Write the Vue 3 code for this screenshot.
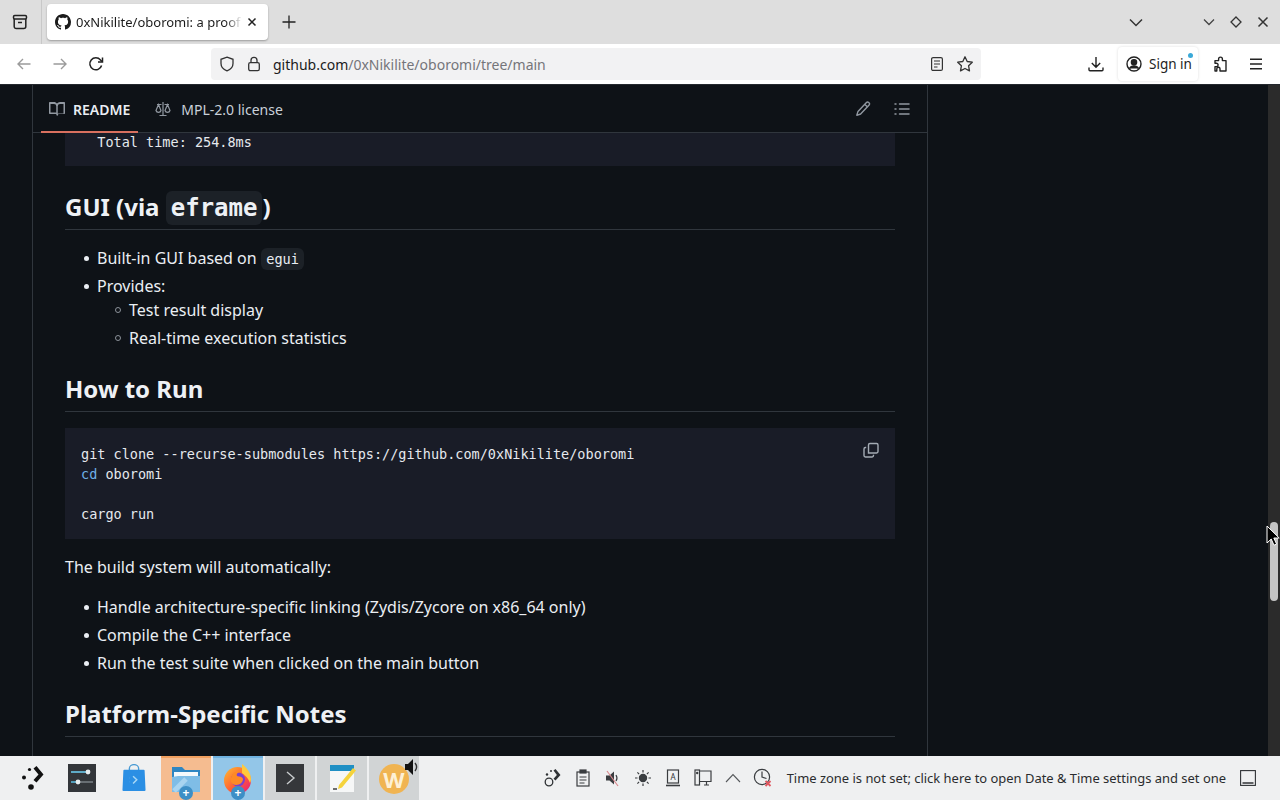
<script setup>
const trayStroke = '#3a3d40'
</script>

<template>
  <div class="screen">
    <header class="tabbar">
      <button class="tb-btn first">
        <svg width="18" height="18" viewBox="0 0 18 18" fill="none" stroke="#222" stroke-width="1.5"><rect x="2.5" y="2.5" width="13" height="3.5" rx="1.2"/><path d="M3.2 6v7.5a2 2 0 0 0 2 2h7.6a2 2 0 0 0 2-2V6"/><path d="M7 9.5h4"/></svg>
      </button>
      <div class="divider"></div>
      <div class="tab">
        <svg class="favicon" width="16" height="16" viewBox="0 0 16 16" fill="#1b1b1b"><path d="M8 0C3.58 0 0 3.58 0 8c0 3.54 2.29 6.53 5.47 7.59.4.07.55-.17.55-.38 0-.19-.01-.82-.01-1.49-2.01.37-2.53-.49-2.69-.94-.09-.23-.48-.94-.82-1.13-.28-.15-.68-.52-.01-.53.63-.01 1.08.58 1.23.82.72 1.21 1.87.87 2.33.66.07-.52.28-.87.51-1.07-1.78-.2-3.64-.89-3.64-3.95 0-.87.31-1.59.82-2.15-.08-.2-.36-1.02.08-2.12 0 0 .67-.21 2.2.82.64-.18 1.32-.27 2-.27s1.36.09 2 .27c1.53-1.04 2.2-.82 2.2-.82.44 1.1.16 1.92.08 2.12.51.56.82 1.27.82 2.15 0 3.07-1.87 3.75-3.65 3.95.29.25.54.73.54 1.48 0 1.07-.01 1.93-.01 2.2 0 .21.15.46.55.38A8.01 8.01 0 0 0 16 8c0-4.42-3.58-8-8-8z"/></svg>
        <span class="tab-title">0xNikilite/oboromi: a proof of concept</span>
        <svg class="tab-x" width="12" height="12" viewBox="0 0 12 12" stroke="#222" stroke-width="1.5"><path d="M2.5 2.5l7 7M9.5 2.5l-7 7"/></svg>
      </div>
      <svg class="plus" width="14" height="14" viewBox="0 0 14 14" stroke="#222" stroke-width="1.3"><path d="M7 .5v13M.5 7h13"/></svg>
      <div class="grow"></div>
      <svg class="chev-all" width="14" height="9" viewBox="0 0 14 9" fill="none" stroke="#333" stroke-width="1.5"><path d="M1 1.5l6 6 6-6"/></svg>
      <svg class="wc wc-1" width="12" height="8" viewBox="0 0 12 8" fill="none" stroke="#444" stroke-width="1.3"><path d="M1 1.5l5 5 5-5"/></svg>
      <svg class="wc wc-2" width="12" height="12" viewBox="0 0 12 12" fill="none" stroke="#333" stroke-width="1.3"><path d="M6 1l5 5-5 5-5-5z"/></svg>
      <svg class="wc wc-3" width="12" height="12" viewBox="0 0 12 12" fill="none" stroke="#333" stroke-width="1.5"><path d="M1.5 1.5l9 9M10.5 1.5l-9 9"/></svg>
    </header>

    <nav class="toolbar">
      <svg class="nav nav-back" width="16" height="16" viewBox="0 0 16 16" fill="none" stroke="#9b9b9b" stroke-width="1.4"><path d="M14.5 8H2M7 3L2 8l5 5"/></svg>
      <svg class="nav nav-fwd" width="16" height="16" viewBox="0 0 16 16" fill="none" stroke="#9b9b9b" stroke-width="1.4"><path d="M1.5 8H14M9 3l5 5-5 5"/></svg>
      <svg class="nav nav-reload" width="16" height="16" viewBox="0 0 16 16" fill="none" stroke="#222" stroke-width="1.5"><path d="M13.6 9.5A6 6 0 1 1 12.5 4L14 5.5"/><path d="M14.5 1.5v4.5H10"/></svg>
      <div class="urlbar">
        <svg width="16" height="16" viewBox="0 0 16 16" fill="none" stroke="#333" stroke-width="1.3"><path d="M8 1.2l6 2.1v4.2c0 3.4-2.4 6-6 7.3-3.6-1.3-6-3.9-6-7.3V3.3z"/></svg>
        <svg class="lock" width="14" height="16" viewBox="0 0 14 16" fill="none" stroke="#333" stroke-width="1.3"><rect x="1.7" y="6.7" width="10.6" height="8" rx="1.6"/><path d="M4 6.7V4.3a3 3 0 0 1 6 0v2.4"/></svg>
        <span class="url"><b>github.com</b>/0xNikilite/oboromi/tree/main</span>
        <div class="grow"></div>
        <svg class="reader" width="14" height="16" viewBox="0 0 14 16" fill="none" stroke="#333" stroke-width="1.2"><rect x="1.6" y="1.6" width="10.8" height="12.8" rx="1.5"/><path d="M4 5h6M4 8h6M4 11h3.5"/></svg>
        <svg class="star" width="18" height="18" viewBox="0 0 18 18" fill="none" stroke="#333" stroke-width="1.3"><path d="M9 1.8l2.2 4.7 5.1.7-3.7 3.6.9 5.1L9 13.5l-4.5 2.4.9-5.1-3.7-3.6 5.1-.7z" stroke-linejoin="round"/></svg>
      </div>
      <svg class="dl" width="16" height="16" viewBox="0 0 16 16" fill="none" stroke="#222" stroke-width="1.4"><path d="M8 1v10M3.8 7L8 11.2 12.2 7M1 11.5v2.3a1 1 0 0 0 1 1h12a1 1 0 0 0 1-1v-2.3"/></svg>
      <div class="signin">
        <svg width="16" height="16" viewBox="0 0 16 16" fill="none" stroke="#222" stroke-width="1.4"><circle cx="8" cy="8" r="7"/><circle cx="8" cy="6.2" r="2.6" fill="#222"/><path d="M3.4 12.6C4.5 10.6 6 10 8 10s3.5.6 4.6 2.6" fill="#222"/></svg>
        <span>Sign in</span>
        <i class="dot"></i>
      </div>
      <svg class="ext" width="16" height="16" viewBox="0 0 16 16" fill="none" stroke="#222" stroke-width="1.4" stroke-linejoin="round"><path d="M2 4.6h3.6V3a1.9 1.9 0 0 1 3.8 0v1.6H13V15H7v-2.2a1.6 1.6 0 0 0-3.2 0V15H2v-4.4h1.4a1.7 1.7 0 0 0 0-3.4H2z"/></svg>
      <svg class="menu" width="14" height="12" viewBox="0 0 14 12" stroke="#222" stroke-width="1.4"><path d="M1 1.2h12M1 6h12M1 10.8h12"/></svg>
    </nav>

    <main class="viewport">
      <section class="readme">
        <div class="readme-head">
          <div class="rtab active">
            <svg width="16" height="16" viewBox="0 0 16 16" fill="#9198a1"><path d="M0 1.75A.75.75 0 0 1 .75 1h4.25c1.2 0 2.27.59 3 1.5A3.74 3.74 0 0 1 11 1h4.25a.75.75 0 0 1 .75.75v10.5a.75.75 0 0 1-.75.75h-5.23c-.55 0-1.01.45-1.02 1a.75.75 0 0 1-1.5 0c-.01-.55-.47-1-1.02-1H.75a.75.75 0 0 1-.75-.75zM7.25 12.8V5.25A2.25 2.25 0 0 0 5 3H1.5v8.5h4.73c.37 0 .72.11 1.02.3zm1.5 0c.3-.19.65-.3 1.02-.3h4.73V3H11a2.25 2.25 0 0 0-2.25 2.25z"/></svg>
            <span>README</span>
          </div>
          <div class="rtab second">
            <svg width="16" height="16" viewBox="0 0 16 16" fill="none" stroke="#9198a1" stroke-width="1.2"><path d="M8 1v13M4.5 14.5h7M2 3.5h4.5M9.5 3.5H14M3.5 3.5L1 9.5a2.6 2.6 0 0 0 5 0zM12.5 3.5L10 9.5a2.6 2.6 0 0 0 5 0z"/></svg>
            <span>MPL-2.0 license</span>
          </div>
          <div class="grow"></div>
          <svg class="pencil" width="16" height="16" viewBox="0 0 16 16" fill="none" stroke="#9198a1" stroke-width="1.4" stroke-linejoin="round"><path d="M11.2 1.8a1.8 1.8 0 0 1 2.9 2.2L5.6 13 1.8 14.3 3 10.4z"/><path d="M9.8 3.4l2.9 2.6"/></svg>
          <svg class="toc" width="16" height="16" viewBox="0 0 16 16" stroke="#9198a1" stroke-width="1.5" stroke-linecap="round"><path d="M5.5 3h9.5M5.5 8h9.5M5.5 13h9.5M1 3h1M1 8h1M1 13h1"/></svg>
        </div>

        <article class="body">
          <pre class="code top"><code>  Total time: 254.8ms</code></pre>

          <h2 class="gui">GUI (via <code class="inline">eframe</code>)</h2>
          <ul>
            <li>Built-in GUI based on <code class="inline">egui</code></li>
            <li>Provides:
              <ul>
                <li>Test result display</li>
                <li>Real-time execution statistics</li>
              </ul>
            </li>
          </ul>

          <h2>How to Run</h2>
          <div class="codewrap">
            <pre class="code"><code>git clone --recurse-submodules https://github.com/0xNikilite/oboromi
<span class="kw">cd</span> oboromi

cargo run</code></pre>
            <svg class="copy" width="16" height="16" viewBox="0 0 16 16" fill="none" stroke="#a4abb4" stroke-width="1.4"><path d="M5.5 3v-.6A1.4 1.4 0 0 1 6.9 1h6.7A1.4 1.4 0 0 1 15 2.4v6.7a1.4 1.4 0 0 1-1.4 1.4H5.5z" transform="translate(0 .5)"/><path d="M3.2 5.5h-.8A1.4 1.4 0 0 0 1 6.9v6.7A1.4 1.4 0 0 0 2.4 15h6.7a1.4 1.4 0 0 0 1.4-1.4v-.8"/></svg>
          </div>

          <p>The build system will automatically:</p>
          <ul>
            <li>Handle architecture-specific linking (Zydis/Zycore on x86_64 only)</li>
            <li>Compile the C++ interface</li>
            <li>Run the test suite when clicked on the main button</li>
          </ul>

          <h2>Platform-Specific Notes</h2>
        </article>
      </section>

      <div class="grow"></div>
      <div class="scrollbar">
        <div class="thumb"></div>
      </div>
      <svg class="cursor" width="14" height="22" viewBox="0 0 14 22"><path d="M1 1v17l4.2-4 2.8 6.2 2.6-1.1-2.8-6.1H13.2z" fill="#000" stroke="#fff" stroke-width="1"/></svg>
    </main>

    <footer class="taskbar">
      <div class="task launcher">
        <svg width="26" height="26" viewBox="0 0 26 26" fill="#111"><circle cx="9.5" cy="4.5" r="1.6"/><circle cx="4" cy="12.5" r="2"/><circle cx="11" cy="22" r="2.8"/><path d="M13.5 3.5l3-2.5 7 8.5-7 8-3-2.6 5-5.4z"/></svg>
      </div>
      <div class="task">
        <svg width="28" height="28" viewBox="0 0 28 28"><rect width="28" height="28" fill="#33363a"/><path d="M3 8h18M11 18h14" stroke="#7b8186" stroke-width="1.4"/><path d="M3 8h17M3 18h8" stroke="#5cc0e4" stroke-width="1.6"/><circle cx="20" cy="8" r="2.4" fill="#e9eef0"/><circle cx="10" cy="18" r="2.4" fill="#e9eef0"/></svg>
      </div>
      <div class="task bag">
        <svg width="26" height="30" viewBox="0 0 26 30"><path d="M8 7V4.5a5 4 0 0 1 10 0V7" fill="none" stroke="#4a9bd4" stroke-width="1.5"/><path d="M2.5 6h21q1 0 1 1l1 21q0 1-1 1H1.500q-1 0-1-1l1-21q0-1 1-1z" fill="#2b8fe4"/><path d="M12 13l4 4-4 4M8 15h.1M8 19h.1" fill="none" stroke="#a9d8f5" stroke-width="1.6"/></svg>
      </div>
      <div class="task folder">
        <svg width="30" height="30" viewBox="0 0 30 30"><path d="M1 3h10l3 3h15v22H1z" fill="#2f86c2"/><rect x="3" y="8" width="24" height="6" fill="#f5f9fb"/><path d="M1 13l6-1h22v16H1z" fill="#7fbde6"/><path d="M3 27L15 15" stroke="#a8d4f0" stroke-width="5"/></svg>
        <i class="badge">+</i>
      </div>
      <div class="task firefox">
        <svg width="32" height="32" viewBox="0 0 32 32"><defs><linearGradient id="fx" x1="0" y1="0" x2="1" y2="1"><stop offset="0" stop-color="#ffbd2e"/><stop offset=".55" stop-color="#ff5c35"/><stop offset="1" stop-color="#e31587"/></linearGradient></defs><circle cx="15.5" cy="17.5" r="13.5" fill="url(#fx)"/><path d="M20 1c5 4 9 9 9 15 0 2-.5 3-1 4-2-6-6-8-8-10z" fill="#ffc93c"/><circle cx="16" cy="16.5" r="7" fill="#7b3fd0"/><path d="M9 15c1-5 6-8 10-6-3 0-5 2-4 4 2 1 5 0 6 3 0 3-3 6-7 6s-6-3-5-7z" fill="#ff8a24"/></svg>
        <i class="badge">+</i>
      </div>
      <div class="task open">
        <svg width="28" height="28" viewBox="0 0 28 28"><rect width="28" height="28" fill="#35373a"/><path d="M11 8l7 6-7 6" fill="none" stroke="#c9ccce" stroke-width="1.4"/></svg>
      </div>
      <div class="task open">
        <svg width="28" height="30" viewBox="0 0 28 30"><rect x="2" y="2" width="24" height="27" fill="#f6f7f7"/><rect x="2" y="2" width="24" height="6" fill="#1f8fc4"/><path d="M11 22L25 5l3 2.500L14 24.500l-4 1.500z" fill="#f5d33b"/><path d="M5 26h4" stroke="#333" stroke-width="1.4"/></svg>
      </div>
      <div class="task open wps">
        <span class="wcoin">W</span>
        <svg class="speaker" width="14" height="20" viewBox="0 0 14 20"><path d="M1 7h3l5-5v16l-5-5H1z" fill="#111"/><path d="M11 6c2 2.500 2 5.500 0 8" fill="none" stroke="#333" stroke-width="1.4"/></svg>
      </div>

      <div class="grow"></div>

      <div class="tray">
        <svg width="18" height="18" viewBox="0 0 18 18" fill="#2f3235"><circle cx="5" cy="13" r="3.800" fill="none" stroke="#2f3235" stroke-width="1.300"/><circle cx="3" cy="5.500" r="1.200"/><circle cx="7" cy="2" r="1"/><path d="M9.500 1.500l2-1.500 5 6-5 5.500-2-1.800 3.400-3.700z"/></svg>
        <svg width="14" height="18" viewBox="0 0 14 18" fill="none" :stroke="trayStroke" stroke-width="1.2"><rect x="1" y="3" width="12" height="14"/><rect x="4" y="1" width="6" height="3" :fill="trayStroke"/><path d="M3.500 8h7M3.500 11h7M3.500 14h5"/></svg>
        <svg width="18" height="18" viewBox="0 0 18 18" fill="none"><path d="M2 6.500h3.500L10 2.500v13l-4.500-4H2z" :fill="trayStroke"/><path d="M12 6c1.300 2 1.300 4 0 6" :stroke="trayStroke" stroke-width="1.2"/><path d="M3 2l11 15" stroke="#d98a8f" stroke-width="1.2"/></svg>
        <svg width="18" height="18" viewBox="0 0 18 18" :stroke="trayStroke" stroke-width="1.2"><circle cx="9" cy="9" r="3.600" :fill="trayStroke"/><path d="M9 1v2.500M9 14.500V17M1 9h2.500M14.500 9H17M3.400 3.400l1.700 1.700M12.900 12.900l1.700 1.700M14.600 3.400l-1.700 1.700M5.100 12.900l-1.700 1.700"/></svg>
        <svg width="16" height="18" viewBox="0 0 16 18" fill="none" :stroke="trayStroke" stroke-width="1.2"><rect x="2.500" y="1" width="11" height="13"/><path d="M1 16.500h14" stroke-width="1.6"/><text x="8" y="11" font-size="8" text-anchor="middle" fill="#2f3235" stroke="none" font-family="Noto Sans, sans-serif">A</text></svg>
        <svg width="18" height="18" viewBox="0 0 18 18" fill="none" :stroke="trayStroke" stroke-width="1.2"><rect x="1" y="1" width="4.500" height="15"/><path d="M5.500 2H17v10.500H5.500M10 16h5M12.500 12.500V16" /><circle cx="3.200" cy="4" r=".6"/></svg>
        <svg width="16" height="10" viewBox="0 0 16 10" fill="none" stroke="#55585b" stroke-width="1.1"><path d="M1 9l7-7.500L15 9"/></svg>
        <svg width="20" height="20" viewBox="0 0 20 20" fill="none" :stroke="trayStroke" stroke-width="1.2"><circle cx="9" cy="9" r="7.600"/><path d="M9 3.500V9l4.500 1.500"/><path d="M12.500 13l5 5M17.500 13l-5 5" stroke="#e0565f" stroke-width="1.8"/></svg>
      </div>
      <span class="clock-text">Time zone is not set; click here to open Date &amp; Time settings and set one</span>
      <svg class="desk" width="16" height="16" viewBox="0 0 16 16" fill="none" stroke="#2f3235" stroke-width="1.1"><rect x=".6" y=".6" width="14.800" height="14.800"/><path d="M2.500 13h11" stroke-width="1.5"/></svg>
    </footer>
  </div>
</template>

<style>
html, body { margin: 0; background: #0e1217; }
</style>

<style scoped>
.screen {
  width: 1280px;
  height: 800px;
  display: flex;
  flex-direction: column;
  overflow: hidden;
  font-family: "Noto Sans", sans-serif;
}
.grow { flex: 1; }

.tabbar {
  height: 44px;
  flex: none;
  background: #dedede;
  display: flex;
  align-items: center;
}
.tb-btn {
  width: 42px;
  height: 44px;
  border: 0;
  padding: 0;
  background: none;
  display: flex;
  align-items: center;
  justify-content: center;
  margin-left: -1px;
}
.divider { width: 1px; height: 44px; background: #c8c8c8; }
.tab {
  margin-left: 5px;
  width: 221px;
  height: 36px;
  background: #fff;
  border-radius: 4px;
  box-shadow: 0 1px 2px rgba(0,0,0,.3);
  display: flex;
  align-items: center;
  position: relative;
  overflow: hidden;
}
.favicon { margin-left: 8px; flex: none; }
.tab-title {
  margin-left: 5px;
  font-size: 13px;
  color: #1b1b1b;
  white-space: nowrap;
  width: 166px;
  overflow: hidden;
  -webkit-mask-image: linear-gradient(to right, #000 90%, transparent);
  mask-image: linear-gradient(to right, #000 90%, transparent);
}
.tab-x { position: absolute; right: 10px; top: 12px; }
.plus { margin-left: 14px; }
.chev-all { margin-right: 60px; }
.wc { flex: none; }
.wc-1 { margin-right: 15px; }
.wc-2 { margin-right: 15px; }
.wc-3 { margin-right: 11px; }

.toolbar {
  height: 40px;
  flex: none;
  background: #fff;
  display: flex;
  align-items: center;
  box-sizing: border-box;
}
.nav { flex: none; }
.nav-back { margin-left: 16px; }
.nav-fwd { margin-left: 20px; }
.nav-reload { margin-left: 20px; }
.urlbar {
  margin-left: 107px;
  width: 770px;
  height: 32px;
  box-sizing: border-box;
  background: #f2f2f3;
  border-radius: 4px;
  display: flex;
  align-items: center;
  padding-left: 8px;
}
.lock { margin-left: 12px; }
.url {
  margin-left: 12px;
  font-size: 14px;
  color: #75757a;
  white-space: nowrap;
}
.url b { font-weight: 400; color: #1b1b1b; }
.reader { margin-right: 12px; }
.star { margin-right: 7px; }
.dl { margin-left: 107px; }
.signin {
  margin-left: 14px;
  width: 80px;
  height: 34px;
  box-sizing: border-box;
  background: #fff;
  border-radius: 4px;
  box-shadow: 0 0 3px rgba(0,0,0,.14);
  display: flex;
  align-items: center;
  padding-left: 8px;
  gap: 7px;
  position: relative;
  font-size: 13.5px;
  color: #222;
}
.dot {
  position: absolute;
  left: 70px;
  top: 6px;
  width: 5px;
  height: 5px;
  border-radius: 50%;
  background: #3aa9d8;
}
.ext { margin-left: 15px; }
.menu { margin-left: 20px; }

.viewport {
  flex: 1;
  min-height: 0;
  background: #0e1217;
  display: flex;
  position: relative;
  overflow: hidden;
  border-top: 1px solid #24282e;
  box-sizing: border-box;
}
.readme {
  margin-left: 32px;
  width: 896px;
  box-sizing: border-box;
  border-left: 1px solid #30363d;
  border-right: 1px solid #30363d;
  flex: none;
  color: #eaeef3;
}
.readme-head {
  height: 48px;
  box-sizing: border-box;
  border-bottom: 1px solid #30363d;
  display: flex;
  align-items: center;
  padding-left: 8px;
  position: relative;
}
.rtab {
  height: 47px;
  box-sizing: border-box;
  padding: 1px 8px 0;
  display: flex;
  align-items: center;
  gap: 8px;
  font-size: 14px;
  color: #eaeef3;
  position: relative;
}
.rtab.second { color: #c9d0d9; gap: 10px; }
.rtab.active { font-weight: 600; margin-right: 9px; }
.rtab.active::after {
  content: "";
  position: absolute;
  left: 0;
  right: 0;
  bottom: -1px;
  height: 2px;
  background: #d9705f;
}
.pencil { margin-right: 23px; }
.toc { margin-right: 17px; }

.body {
  padding: 0 32px;
  font-size: 16px;
  line-height: 24px;
}
.code {
  margin: 0 0 16px;
  padding: 16px 16px 15px;
  background: #191c27;
  font-family: "DejaVu Sans Mono", monospace;
  font-size: 13.53px;
  line-height: 20px;
  color: #e6e9ee;
  white-space: pre;
}
.code.top { padding-top: 0; padding-bottom: 14px; margin-bottom: 0; }
.code.top code { display: block; margin-top: -1px; }
.kw { color: #6fb0e8; }
.codewrap { position: relative; }
.copy { position: absolute; right: 16px; top: 14px; }
h2 {
  margin: 24px 0 16px;
  padding-bottom: 7px;
  border-bottom: 1px solid #30363d;
  font-size: 24px;
  line-height: 30px;
  font-weight: 700;
  color: #eef1f5;
}
h2.gui { padding-top: 2px; }
.inline {
  font-family: "DejaVu Sans Mono", monospace;
  font-size: 13.6px;
  line-height: 1;
  background: #1c2127;
  border-radius: 6px;
  padding: 3px 5.4px;
}
h2 .inline { font-size: 24px; padding: 3px 5px; }
p { margin: 0 0 16px; }
ul {
  margin: 0 0 16px;
  padding: 0 0 0 32px;
  list-style: none;
}
ul ul { margin: 0; }
li { position: relative; }
li + li { margin-top: 4px; }
li::before {
  content: "";
  position: absolute;
  left: -13.5px;
  top: 10px;
  width: 5px;
  height: 5px;
  border-radius: 50%;
  background: #eaeef3;
}
ul ul li::before {
  left: -14px;
  top: 9px;
  width: 4px;
  height: 4px;
  background: none;
  border: 1px solid #8b9199;
}

.scrollbar {
  width: 12px;
  flex: none;
  background: #2b2b2b;
  position: relative;
}
.thumb {
  position: absolute;
  left: 2px;
  width: 8px;
  top: 437px;
  height: 79px;
  border-radius: 4px;
  background: #c4c4c4;
}
.cursor { position: absolute; left: 1266px; top: 440px; }

.taskbar {
  height: 44px;
  flex: none;
  background: #eff0f1;
  display: flex;
  align-items: stretch;
  padding-left: 5px;
  box-sizing: border-box;
}
.task {
  width: 50px;
  margin-right: 2px;
  display: flex;
  align-items: center;
  justify-content: center;
  position: relative;
  flex: none;
}
.launcher { padding-left: 6px; box-sizing: border-box; }
.bag svg { width: 24px; height: 28px; }
.folder { background: #f5bc90; border-top: 2px solid #f0a060; box-sizing: border-box; }
.firefox { background: #93c6e8; border-top: 2px solid #6fb2e0; box-sizing: border-box; }
.open { background: #d1d4d5; }
.badge {
  position: absolute;
  left: 18px;
  bottom: 0;
  width: 14px;
  height: 14px;
  border-radius: 50%;
  background: #3d8fc6;
  color: #fff;
  font-size: 12px;
  line-height: 13px;
  text-align: center;
  font-style: normal;
  font-weight: 700;
}
.wcoin {
  width: 30px;
  height: 30px;
  margin-top: 2px;
  border-radius: 50%;
  background: #f0b452;
  color: #fdf0d6;
  font-weight: 700;
  font-size: 22px;
  line-height: 30px;
  text-align: center;
}
.speaker { position: absolute; right: 1px; top: 1px; }

.tray {
  display: grid;
  grid-template-columns: repeat(8, 30px);
  align-items: center;
  justify-items: center;
}
.clock-text {
  align-self: center;
  margin-left: 9px;
  font-size: 12.94px;
  color: #2a2c2e;
  white-space: nowrap;
}
.desk { align-self: center; margin-left: 14px; margin-right: 24px; }
</style>
